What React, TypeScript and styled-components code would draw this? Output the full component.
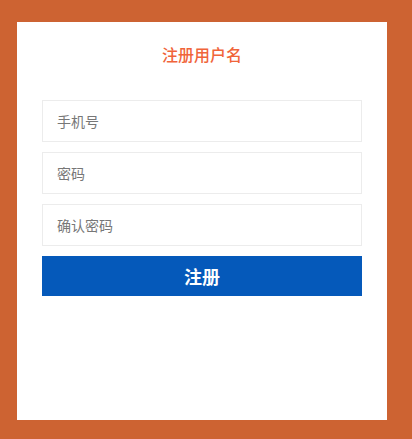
import React from "react";
import styled, { createGlobalStyle } from "styled-components";

const GlobalStyle = createGlobalStyle`
    html, body {
        margin: 0;
        padding: 0;
        background: #cd6332;
        font-family: "Microsoft YaHei", "Noto Sans CJK SC", "Liberation Sans", sans-serif;
    }
`;

const fields = ["手机号", "密码", "确认密码"];

const App: React.FC = () => {
    return (
        <>
            <GlobalStyle />
            <Page>
                <Card>
                    <Title>注册用户名</Title>
                    <Form onSubmit={e => e.preventDefault()}>
                        {fields.map(label => (
                            <Field
                                key={label}
                                type={label.includes("密码") ? "password" : "text"}
                                placeholder={label}
                            />
                        ))}
                        <SubmitButton type="submit">注册</SubmitButton>
                    </Form>
                </Card>
            </Page>
        </>
    );
};

export default App;

/* ~~~~~~ -- styling -- ~~~~~~ */

const Page = styled.div`
    box-sizing: border-box;
    width: 412px;
    height: 439px;
    padding: 22px 25px 19px 17px;
    display: flex;
`;

const Card = styled.div`
    flex: 1;
    background: #ffffff;
    padding: 0 25px;
    display: flex;
    flex-direction: column;
`;

const Title = styled.h2`
    margin: 22px 0 36px;
    height: 20px;
    line-height: 20px;
    font-size: 16px;
    font-weight: 500;
    color: #f0643a;
    text-align: center;
`;

const Form = styled.form`
    display: flex;
    flex-direction: column;
    gap: 10px;
`;

const Field = styled.input`
    box-sizing: border-box;
    width: 100%;
    height: 42px;
    margin: 0;
    padding: 0 14px;
    border: 1px solid #ececec;
    border-radius: 0;
    outline: none;
    font-family: inherit;
    font-size: 14px;
    color: #333;
    background: #fff;
    &::placeholder {
        color: #777;
    }
`;

const SubmitButton = styled.button`
    height: 40px;
    margin: 0;
    border: none;
    border-radius: 0;
    background: #0559ba;
    color: #ffffff;
    font-family: inherit;
    font-size: 18px;
    font-weight: bold;
    cursor: pointer;
`;
